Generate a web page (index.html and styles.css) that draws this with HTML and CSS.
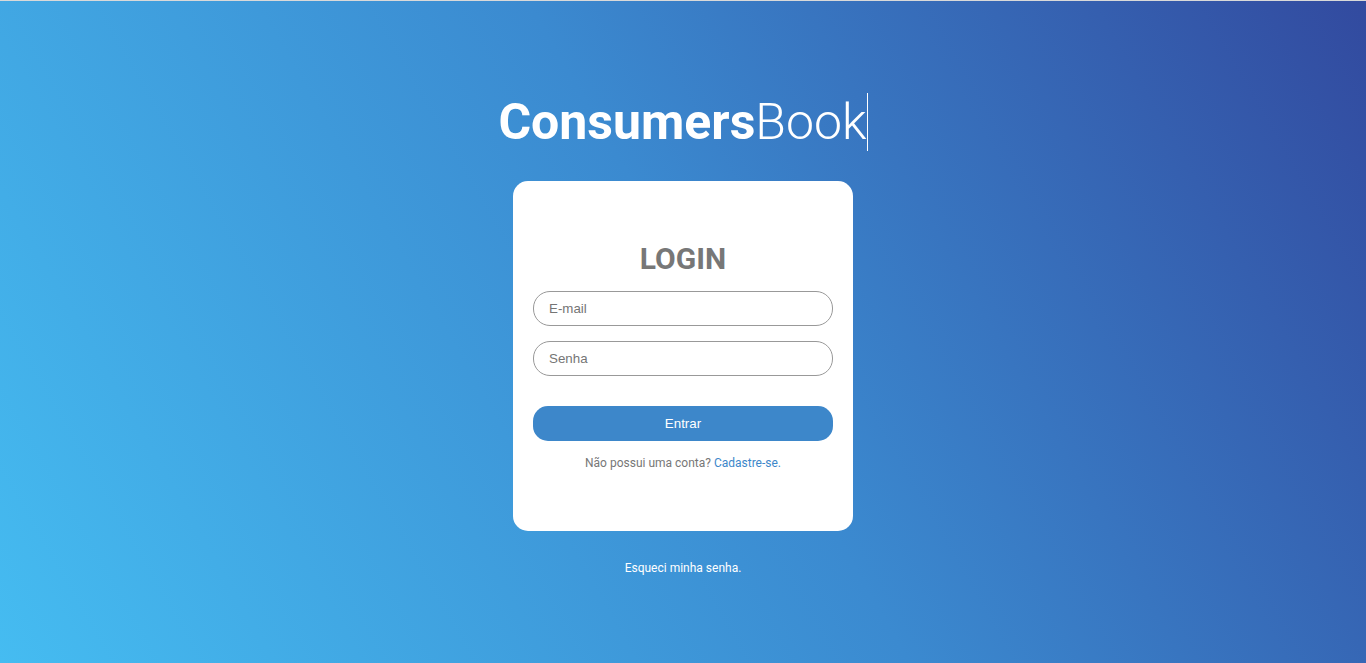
FILE: index.html
```html
<!DOCTYPE html>
<html lang="pt-BR">
<head>
<meta charset="utf-8">
<title>ConsumersBook - Login</title>
<link rel="stylesheet" href="styles.css">
</head>
<body>
<main class="page">
  <h1 class="brand"><span class="brand-bold">Consumers</span><span class="brand-light">Book</span></h1>
  <section class="card">
    <h2 class="card-title">LOGIN</h2>
    <form class="form">
      <input class="field" type="email" placeholder="E-mail">
      <input class="field" type="password" placeholder="Senha">
      <button class="btn" type="button">Entrar</button>
    </form>
    <p class="signup">Não possui uma conta? <a class="link" href="#">Cadastre-se.</a></p>
  </section>
  <a class="forgot" href="#">Esqueci minha senha.</a>
</main>
</body>
</html>
```
FILE: styles.css
```css
html, body {
  margin: 0;
  padding: 0;
  height: 100%;
}
body {
  background: linear-gradient(60deg, #45bcf1 0%, #3b8ad0 52%, #324a9f 100%);
  border-top: 1px solid #d9d9d9;
  box-sizing: border-box;
  font-family: Roboto, "Liberation Sans", sans-serif;
  overflow: hidden;
}
.page {
  display: flex;
  flex-direction: column;
  align-items: center;
  padding-top: 92px;
}
.brand {
  margin: 0;
  font-size: 50px;
  line-height: 58px;
  color: #fff;
  font-weight: 400;
  border-right: 1px solid #fff;
  letter-spacing: 0;
}
.brand-bold { font-weight: 700; }
.brand-light { font-weight: 300; }
.card {
  margin-top: 30px;
  width: 340px;
  height: 350px;
  box-sizing: border-box;
  background: #fff;
  border-radius: 15px;
  padding: 0 20px;
  display: flex;
  flex-direction: column;
  align-items: center;
}
.card-title {
  margin: 59px 0 13px;
  font-size: 30px;
  line-height: 38px;
  font-weight: 700;
  color: #777;
}
.form {
  width: 100%;
  display: flex;
  flex-direction: column;
}
.field {
  height: 35px;
  box-sizing: border-box;
  border: 1px solid #999;
  border-radius: 17px;
  padding: 0 15px;
  font-family: "Liberation Sans", Arial, sans-serif;
  font-size: 13.33px;
  color: #333;
  outline: none;
  margin-bottom: 15px;
}
.field::placeholder { color: #757575; }
.btn {
  margin-top: 15px;
  height: 35px;
  border: none;
  border-radius: 15px;
  background: #3d87ca;
  color: #fff;
  font-family: "Liberation Sans", Arial, sans-serif;
  font-size: 13.33px;
  cursor: pointer;
}
.signup {
  margin: 15px 0 0;
  font-size: 12px;
  line-height: 14px;
  color: #777;
}
.link {
  color: #3d87ca;
  text-decoration: none;
}
.forgot {
  margin-top: 30px;
  font-size: 12px;
  line-height: 14px;
  color: #fff;
  text-decoration: none;
}
```
